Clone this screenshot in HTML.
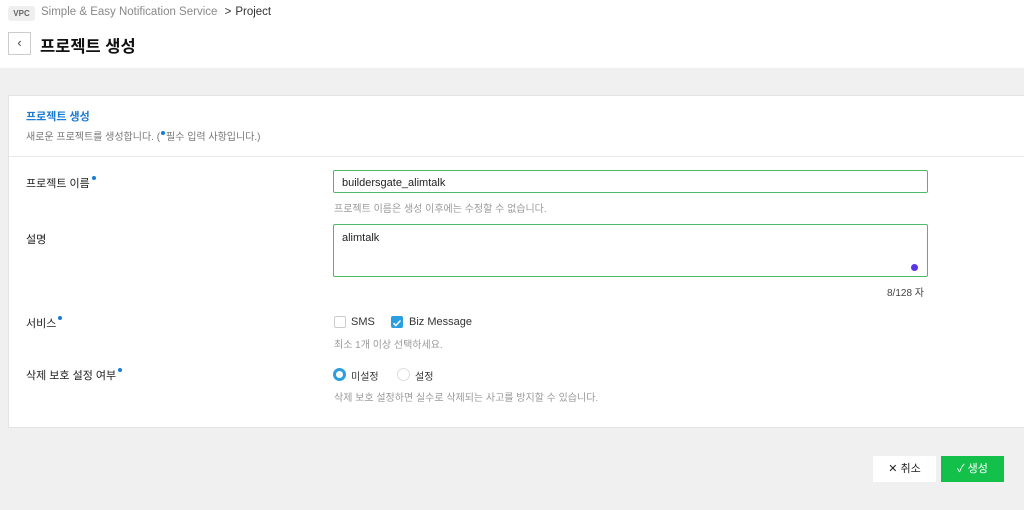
<!DOCTYPE html>
<html><head><meta charset="utf-8"><style>
*{margin:0;padding:0;box-sizing:border-box}
body{width:1024px;height:510px;background:#f0f0f0;font-family:"Liberation Sans","Noto Sans CJK KR",sans-serif;position:relative;overflow:hidden;color:#333}
.top{position:absolute;left:0;top:0;width:1024px;height:68px;background:#fff}
.abs{position:absolute;white-space:nowrap}
.card{position:absolute;left:8px;top:95px;width:1020px;height:333px;background:#fff;border:1px solid #e4e4e4}
.lbl{font-size:11px;color:#222}
.dot{display:inline-block;width:4px;height:4px;border-radius:50%;background:#1a7ad4;vertical-align:top;margin-left:2px;margin-top:1px}
.help{font-size:10px;color:#999}
.inp{position:absolute;border:1px solid #4cb96c;border-radius:2px;background:#fff;font-size:11px;color:#222;padding:6px 8px}
</style></head><body>
<div class="top"></div>
<div class="abs" style="left:8px;top:6px;width:27px;height:15px;background:#efefef;border-radius:3px;font-size:8px;color:#666;text-align:center;line-height:15px;font-weight:bold">VPC</div>
<div class="abs" style="left:41px;top:6px;font-size:11.5px;color:#888">Simple &amp; Easy Notification Service <span style="color:#333;margin:0 4px">&gt;</span><span style="color:#333">Project</span></div>
<div class="abs" style="left:8px;top:32px;width:23px;height:23px;border:1px solid #ccc;background:#fff;font-size:13px;text-align:center;line-height:20px;color:#444">‹</div>
<div class="abs" style="left:40px;top:33px;font-size:16.5px;font-weight:bold;color:#111">프로젝트 생성</div>
<div class="card">
 <div style="position:absolute;left:0;top:60px;width:100%;height:1px;background:#e8e8e8"></div>
</div>
<div class="abs" style="left:26px;top:108px;font-size:11px;font-weight:bold;color:#1a7ad4">프로젝트 생성</div>
<div class="abs" style="left:26px;top:128px;font-size:10px;color:#777">새로운 프로젝트를 생성합니다. (<span class="dot" style="margin:3px 1px 0 1px"></span>필수 입력 사항입니다.)</div>
<div class="abs lbl" style="left:26px;top:175px">프로젝트 이름<span class="dot"></span></div>
<div class="inp" style="left:333px;top:170px;width:595px;height:23px">buildersgate_alimtalk</div>
<div class="abs help" style="left:334px;top:200px">프로젝트 이름은 생성 이후에는 수정할 수 없습니다.</div>
<div class="abs lbl" style="left:26px;top:231px">설명</div>
<div class="inp" style="left:333px;top:224px;width:595px;height:53px;padding-top:7px">alimtalk</div>
<div class="abs" style="left:911px;top:264px;width:7px;height:7px;border-radius:50%;background:#5a35e8"></div>
<div class="abs" style="left:887px;top:284px;font-size:10px;color:#444">8/128 자</div>
<div class="abs lbl" style="left:26px;top:315px">서비스<span class="dot"></span></div>
<div class="abs" style="left:334px;top:316px;width:12px;height:12px;border:1px solid #ccc;border-radius:2px"></div>
<div class="abs" style="left:351px;top:316px;font-size:11px">SMS</div>
<div class="abs" style="left:391px;top:316px;width:12px;height:12px;background:#2a9ee0;border-radius:2px"><svg width="12" height="12"><path d="M2.5 6.2l2.3 2.3 4.7-5" stroke="#fff" stroke-width="1.5" fill="none"/></svg></div>
<div class="abs" style="left:409px;top:316px;font-size:11px">Biz Message</div>
<div class="abs help" style="left:334px;top:336px">최소 1개 이상 선택하세요.</div>
<div class="abs lbl" style="left:26px;top:367px">삭제 보호 설정 여부<span class="dot"></span></div>
<div class="abs" style="left:333px;top:368px;width:13px;height:13px;border-radius:50%;border:3.5px solid #2a9ee0"></div>
<div class="abs" style="left:351px;top:368px;font-size:10px">미설정</div>
<div class="abs" style="left:397px;top:368px;width:13px;height:13px;border-radius:50%;border:1px solid #ddd"></div>
<div class="abs" style="left:415px;top:368px;font-size:10px">설정</div>
<div class="abs help" style="left:334px;top:389px">삭제 보호 설정하면 실수로 삭제되는 사고를 방지할 수 있습니다.</div>
<div class="abs" style="left:873px;top:456px;width:63px;height:26px;background:#fff;font-size:11px;text-align:center;line-height:26px;color:#222">✕ 취소</div>
<div class="abs" style="left:941px;top:456px;width:63px;height:26px;background:#12c04a;font-size:11px;text-align:center;line-height:26px;color:#fff">✓ 생성</div>
</body></html>
